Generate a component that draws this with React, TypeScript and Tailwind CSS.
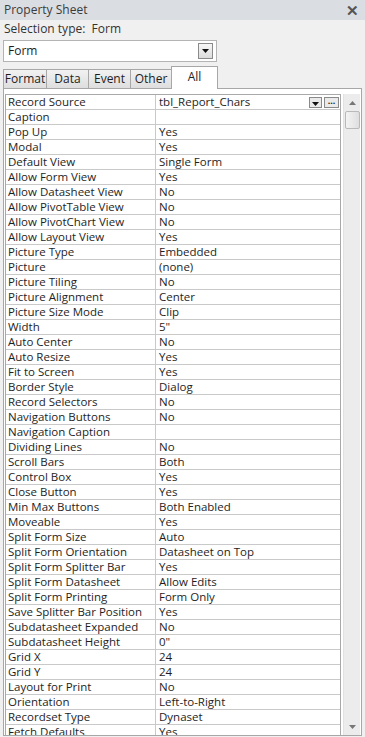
import React from "react";

const rows: [string, string][] = [
  ["Record Source", "tbl_Report_Chars"],
  ["Caption", ""],
  ["Pop Up", "Yes"],
  ["Modal", "Yes"],
  ["Default View", "Single Form"],
  ["Allow Form View", "Yes"],
  ["Allow Datasheet View", "No"],
  ["Allow PivotTable View", "No"],
  ["Allow PivotChart View", "No"],
  ["Allow Layout View", "Yes"],
  ["Picture Type", "Embedded"],
  ["Picture", "(none)"],
  ["Picture Tiling", "No"],
  ["Picture Alignment", "Center"],
  ["Picture Size Mode", "Clip"],
  ["Width", '5"'],
  ["Auto Center", "No"],
  ["Auto Resize", "Yes"],
  ["Fit to Screen", "Yes"],
  ["Border Style", "Dialog"],
  ["Record Selectors", "No"],
  ["Navigation Buttons", "No"],
  ["Navigation Caption", ""],
  ["Dividing Lines", "No"],
  ["Scroll Bars", "Both"],
  ["Control Box", "Yes"],
  ["Close Button", "Yes"],
  ["Min Max Buttons", "Both Enabled"],
  ["Moveable", "Yes"],
  ["Split Form Size", "Auto"],
  ["Split Form Orientation", "Datasheet on Top"],
  ["Split Form Splitter Bar", "Yes"],
  ["Split Form Datasheet", "Allow Edits"],
  ["Split Form Printing", "Form Only"],
  ["Save Splitter Bar Position", "Yes"],
  ["Subdatasheet Expanded", "No"],
  ["Subdatasheet Height", '0"'],
  ["Grid X", "24"],
  ["Grid Y", "24"],
  ["Layout for Print", "No"],
  ["Orientation", "Left-to-Right"],
  ["Recordset Type", "Dynaset"],
  ["Fetch Defaults", "Yes"],
];

const tabs = ["Format", "Data", "Event", "Other"];
const tabWidths = ["w-[44px]", "w-[43px]", "w-[43px]", "w-[42px]"];

function DownArrow() {
  return (
    <svg width="7" height="4" viewBox="0 0 7 4">
      <path d="M0 0h7L3.5 4z" fill="#111" />
    </svg>
  );
}

export default function App() {
  return (
    <div className="w-[365px] h-[737px] overflow-hidden bg-[#f0f0f0] text-[12px] text-[#1e1e1e] flex flex-col" style={{ fontFamily: '"Open Sans", "Liberation Sans", sans-serif' }}>
      {/* title bar */}
      <div className="h-[20px] bg-[#dadee3] flex items-center justify-between pl-[4px] pr-[6px] text-[#3b3b3b]">
        <span>Property Sheet</span>
        <span className="text-[15px] font-bold text-[#555] leading-none">✕</span>
      </div>
      <div className="h-[18px] pl-[4px] flex items-center text-[#333]">Selection type:&nbsp; Form</div>

      {/* object picker */}
      <div className="mt-[2px] ml-[3px] w-[214px] h-[22px] bg-white border border-[#b4b4b4] flex items-center justify-between pl-[4px] pr-[3px]">
        <span>Form</span>
        <div className="w-[15px] h-[16px] border border-[#8a8a8a] bg-gradient-to-b from-[#f7f7f7] to-[#dcdcdc] flex items-center justify-center">
          <DownArrow />
        </div>
      </div>

      {/* tabs */}
      <div className="mt-[4px] ml-[3px] h-[22px] flex items-end relative z-10">
        {tabs.map((t, i) => (
          <div key={t} className={`${tabWidths[i]} h-[19px] -mr-[1px] border border-[#a7a7a7] border-b-0 bg-gradient-to-b from-[#f2f2f2] to-[#dedede] flex items-center justify-center`}>
            {t}
          </div>
        ))}
        <div className="w-[47px] h-[23px] -mb-[1px] border border-[#a7a7a7] border-b-0 bg-white flex items-start justify-center pt-[1px]">All</div>
      </div>

      {/* property grid panel */}
      <div className="ml-[3px] w-[359px] h-[648px] border border-[#a7a7a7] bg-white flex pt-[5px] pl-[1px] overflow-hidden text-[11.5px]">
        <div className="w-[336px] border border-[#a9a9a9] self-start">
          {rows.map(([k, v], i) => (
            <div key={k} className="h-[15px] flex border-b border-[#c9c9c9] leading-[14px]">
              <div className="w-[150px] shrink-0 border-r border-[#c9c9c9] pl-[2px] whitespace-nowrap overflow-hidden">{k}</div>
              <div className="flex-1 pl-[3px] flex items-center justify-between whitespace-nowrap">
                <span>{v}</span>
                {i === 0 && (
                  <div className="flex gap-[2px] pr-[1px]">
                    <div className="w-[13px] h-[11px] border border-[#8a8a8a] bg-[#eaeaea] flex items-end justify-center pb-[1px]">
                      <DownArrow />
                    </div>
                    <div className="w-[15px] h-[11px] border border-[#8a8a8a] bg-[#eaeaea] flex items-center justify-center text-[9px] font-bold leading-none pb-[3px]">...</div>
                  </div>
                )}
              </div>
            </div>
          ))}
        </div>

        {/* scrollbar */}
        <div className="ml-[2px] w-[17px] h-[641px] bg-[#ececec] border-l border-[#e2e2e2] flex flex-col items-center">
          <div className="h-[17px] flex items-center justify-center">
            <svg width="7" height="4" viewBox="0 0 7 4">
              <path d="M0 4h7L3.5 0z" fill="#777" />
            </svg>
          </div>
          <div className="w-[15px] h-[18px] rounded-[2px] border border-[#b9b9b9] bg-gradient-to-r from-[#f4f4f4] to-[#dedede]" />
          <div className="flex-1" />
          <div className="h-[17px] flex items-center justify-center">
            <svg width="7" height="4" viewBox="0 0 7 4">
              <path d="M0 0h7L3.5 4z" fill="#777" />
            </svg>
          </div>
        </div>
      </div>
    </div>
  );
}
